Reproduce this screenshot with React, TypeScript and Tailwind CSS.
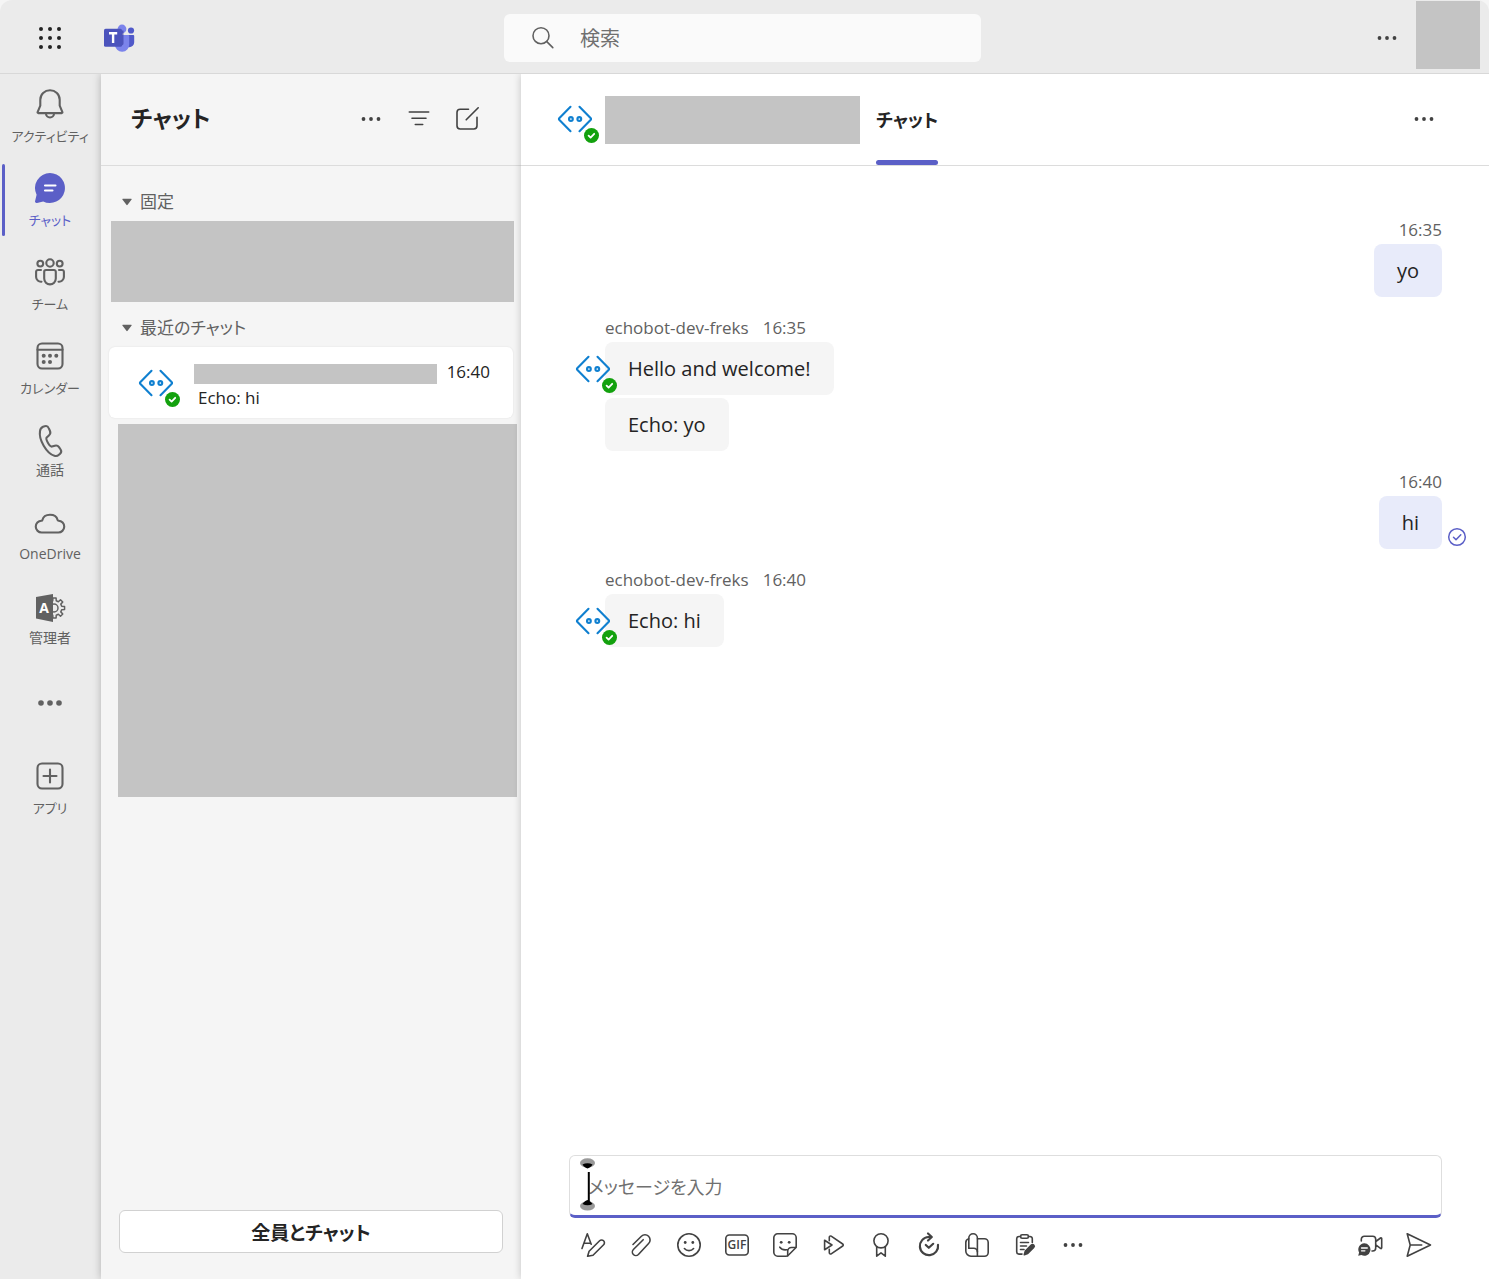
import React from "react";
import type { ReactNode } from "react";

/* ---------- icon helpers ---------- */

function Icon({
  size = 30,
  stroke = 1.6,
  className = "",
  children,
}: {
  size?: number;
  stroke?: number;
  className?: string;
  children: ReactNode;
}) {
  return (
    <svg
      width={size}
      height={size}
      viewBox={`0 0 ${size} ${size}`}
      fill="none"
      stroke="currentColor"
      strokeWidth={stroke}
      strokeLinecap="round"
      strokeLinejoin="round"
      aria-hidden="true"
      className={`shrink-0 ${className}`}
    >
      {children}
    </svg>
  );
}

function RailIcon({ children }: { children: ReactNode }) {
  return (
    <Icon size={36} stroke={2.1}>
      {children}
    </Icon>
  );
}

function Dots({ r = 1.9, gap = 7.5, size = 30 }: { r?: number; gap?: number; size?: number }) {
  const c = size / 2;
  return (
    <Icon size={size}>
      <g fill="currentColor" stroke="none">
        <circle cx={c - gap} cy={c} r={r} />
        <circle cx={c} cy={c} r={r} />
        <circle cx={c + gap} cy={c} r={r} />
      </g>
    </Icon>
  );
}

function gearPath(cx: number, cy: number, outer: number, inner: number, teeth: number) {
  const step = (Math.PI * 2) / teeth;
  const points: string[] = [];
  for (let i = 0; i < teeth; i++) {
    const a = i * step;
    const corners: [number, number][] = [
      [inner, a - step * 0.3],
      [outer, a - step * 0.2],
      [outer, a + step * 0.2],
      [inner, a + step * 0.3],
    ];
    for (const [r, t] of corners) {
      points.push(`${(cx + r * Math.cos(t)).toFixed(2)} ${(cy + r * Math.sin(t)).toFixed(2)}`);
    }
  }
  return `M${points.join("L")}Z`;
}

function TeamsLogo() {
  return (
    <svg width="32" height="30" viewBox="0 0 32 30" aria-label="Teams" role="img" className="shrink-0">
      <circle cx="27" cy="7.5" r="3.1" fill="#5059c9" />
      <path d="M22 12h7.3c.5 0 .9.4.9.9v6.3a5 5 0 0 1-5 5H22z" fill="#5059c9" />
      <circle cx="18" cy="6" r="4.4" fill="#7b83eb" />
      <path d="M10 12h14c.7 0 1.200.5 1.200 1.200v8a7.200 7.200 0 0 1-14.400.6z" fill="#7b83eb" />
      <path d="M11 7.500h8.500v13c0 1-.8 1.800-1.800 1.800H11z" fill="#3b3fa6" opacity=".7" />
      <rect x="0" y="5.800" width="18" height="18" rx="1.600" fill="#4b53bc" />
      <path d="M5 10.300h8.200M9.100 10.300v9.700" stroke="#fff" strokeWidth="2.400" fill="none" />
    </svg>
  );
}

function BotAvatar() {
  return (
    <svg width="44" height="44" viewBox="0 0 44 44" aria-hidden="true" className="shrink-0">
      <g fill="none" stroke="#1080d0" strokeWidth="2.100" strokeLinecap="round" strokeLinejoin="round">
        <path d="M15.500 7.800 4 19.500v1l11.500 11.700M24.500 7.800l11.500 11.700v1L24.500 32.200" />
        <circle cx="15.900" cy="20" r="1.900" />
        <circle cx="24.300" cy="20" r="1.900" />
      </g>
      <circle cx="36.500" cy="36.500" r="7.500" fill="#13a10e" />
      <path
        d="m33.600 36.600 2 2 3.600-3.800"
        fill="none"
        stroke="#fff"
        strokeWidth="1.800"
        strokeLinecap="round"
        strokeLinejoin="round"
      />
    </svg>
  );
}

function Triangle() {
  return (
    <svg width="10" height="8" viewBox="0 0 10 8" aria-hidden="true" className="shrink-0">
      <path d="M.8.800h8.400a.5.5 0 0 1 .4.800L5.600 6.800a.8.8 0 0 1-1.200 0L.4 1.600A.5.5 0 0 1 .8.800z" fill="#616161" />
    </svg>
  );
}

/* ---------- app rail ---------- */

const railItems: { label: string; kana?: boolean; active?: boolean; icon: ReactNode }[] = [
  {
    label: "アクティビティ",
    kana: true,
    icon: (
      <RailIcon>
        <path d="M18 4.200c-5.400 0-9.700 4.200-9.700 9.500v6L5.600 26.100c-.2.500.1 1 .7 1h23.400c.6 0 .9-.5.7-1l-2.700-6.400v-6c0-5.300-4.300-9.500-9.700-9.500z" />
        <path d="M14 27.500a4 4 0 0 0 8 0" />
      </RailIcon>
    ),
  },
  {
    label: "チャット",
    kana: true,
    active: true,
    icon: (
      <RailIcon>
        <path
          d="M18 3a15 15 0 1 1-6.800 28.400L5 32.900a1.500 1.500 0 0 1-1.900-1.900l1.500-6.200A15 15 0 0 1 18 3z"
          fill="currentColor"
          stroke="none"
        />
        <path d="M13 15.500h10.500M13 20.500h7.500" stroke="#fff" />
      </RailIcon>
    ),
  },
  {
    label: "チーム",
    kana: true,
    icon: (
      <RailIcon>
        <circle cx="18" cy="9" r="3.700" />
        <circle cx="8.300" cy="9.600" r="2.900" />
        <circle cx="27.700" cy="9.600" r="2.900" />
        <path d="M14 16h8a1.800 1.800 0 0 1 1.800 1.800v6.800a5.800 5.800 0 0 1-11.600 0v-6.800A1.800 1.800 0 0 1 14 16z" />
        <path d="M9 16H5.900A1.800 1.800 0 0 0 4.100 17.800v5.200a4.800 4.800 0 0 0 5.400 4.700M27 16h3.100a1.800 1.800 0 0 1 1.800 1.800v5.200a4.800 4.800 0 0 1-5.400 4.700" />
      </RailIcon>
    ),
  },
  {
    label: "カレンダー",
    kana: true,
    icon: (
      <RailIcon>
        <rect x="5.500" y="5.500" width="25" height="25" rx="4.500" />
        <path d="M5.500 11.800h25" />
        <g fill="currentColor" stroke="none">
          <circle cx="11.700" cy="17.800" r="2" />
          <circle cx="18" cy="17.800" r="2" />
          <circle cx="24.300" cy="17.800" r="2" />
          <circle cx="11.700" cy="24" r="2" />
          <circle cx="18" cy="24" r="2" />
        </g>
      </RailIcon>
    ),
  },
  {
    label: "通話",
    icon: (
      <RailIcon>
        <path d="m11 4.700 1.700-.5a3.300 3.300 0 0 1 4 1.900l1.200 2.700a4 4 0 0 1-1 4.700l-2.200 2c-.8.900-.3 2.700 1.200 5.300s2.800 4.100 4 3.800l2.900-.9a3.800 3.800 0 0 1 4.200 1.500l1.600 2.300a3.300 3.300 0 0 1-.5 4.200l-1.200 1.100a4.500 4.500 0 0 1-4.500 1c-3.900-1.200-7.500-4.600-10.700-10.100S7.300 13.200 8 9.200a5.200 5.200 0 0 1 3-4.500z" />
      </RailIcon>
    ),
  },
  {
    label: "OneDrive",
    icon: (
      <RailIcon>
        <path d="M9.800 26.500h16.400a5.900 5.900 0 0 0 .3-11.800c-.5 0-.8-.3-.9-.7C24.800 10.700 21.800 8.800 18 8.800s-6.800 1.900-7.600 5.200c-.1.400-.4.700-.9.700a5.900 5.900 0 0 0 .3 11.800z" />
      </RailIcon>
    ),
  },
  {
    label: "管理者",
    icon: (
      <RailIcon>
        <path d={gearPath(22.5, 18, 10.2, 7.4, 8)} strokeWidth="1.500" />
        <circle cx="22" cy="18" r="4" strokeWidth="1.500" />
        <path d="M4 7 21 4v28L4 28.500z" fill="currentColor" stroke="none" />
        <text
          x="12"
          y="22.500"
          textAnchor="middle"
          fill="#fff"
          stroke="none"
          fontSize="14"
          fontWeight="700"
          fontFamily="Open Sans, sans-serif"
        >
          A
        </text>
      </RailIcon>
    ),
  },
  { label: "", icon: <Dots size={36} r={2.8} gap={9} /> },
  {
    label: "アプリ",
    kana: true,
    icon: (
      <RailIcon>
        <rect x="5.500" y="5.500" width="25" height="25" rx="4.500" />
        <path d="M18 11.500v13M11.500 18h13" />
      </RailIcon>
    ),
  },
];

function Rail() {
  return (
    <nav aria-label="アプリ バー" className="flex w-[101px] shrink-0 flex-col bg-[#ebebeb]">
      {railItems.map((item, i) => (
        <button
          key={i}
          type="button"
          aria-label={item.label || "その他"}
          className={`relative flex h-[84px] flex-col items-center pr-px ${
            item.label ? "justify-start pt-3" : "justify-center pb-0.5"
          } ${item.active ? "text-[#5b5fc7]" : "text-[#616161]"}`}
        >
          {item.active && <span className="absolute top-1.5 left-0.5 h-18 w-[3px] rounded-full bg-[#5b5fc7]" />}
          {item.icon}
          {item.label && (
            <span
              className={`leading-5 whitespace-nowrap ${item.kana ? "mt-1 text-[13px]" : "mt-0.5 text-sm"}`}
            >
              {item.label}
            </span>
          )}
        </button>
      ))}
    </nav>
  );
}

/* ---------- chat list ---------- */

function IconButton({ label, children }: { label: string; children: ReactNode }) {
  return (
    <button type="button" aria-label={label} className="flex shrink-0 items-center justify-center text-[#424242]">
      {children}
    </button>
  );
}

function ChatList() {
  return (
    <aside className="z-10 flex w-[420px] shrink-0 flex-col bg-[#f5f5f5] shadow-[0_0_8px_rgba(0,0,0,0.25)]">
      <div className="flex h-[92px] items-center border-b border-[#dcdcdc] pr-[39px] pb-0.5 pl-[30px]">
        <h1 className="flex-1 text-[23px] font-bold text-[#242424]">チャット</h1>
        <div className="flex gap-[18px]">
          <IconButton label="その他のオプション">
            <Dots />
          </IconButton>
          <IconButton label="フィルター">
            <Icon>
              <path d="M5.300 8h19.400M8 14.300h14M11.300 20.500h7.400" />
            </Icon>
          </IconButton>
          <IconButton label="新しいチャット">
            <Icon>
              <path d="M16.500 5.200H8.200a3.200 3.200 0 0 0-3.200 3.200v13.400A3.200 3.200 0 0 0 8.200 25h13.600a3.200 3.200 0 0 0 3.200-3.200v-8.600" />
              <path d="M14.200 15.800 26.200 3.800" />
            </Icon>
          </IconButton>
        </div>
      </div>

      <div className="flex flex-1 flex-col pt-[15px]">
        <button type="button" className="flex h-10 items-center gap-2 pt-0.5 pl-[21px] text-[17px] text-[#616161]">
          <Triangle />
          固定
        </button>
        <div className="mr-[7px] ml-2.5 h-[81px] bg-[#c4c4c4]" />
        <button type="button" className="flex h-[45px] items-center gap-2 pt-1.5 pl-[21px] text-[17px] text-[#616161]">
          <Triangle />
          最近のチャット
        </button>
        <button
          type="button"
          className="mr-2 ml-2 flex h-[71px] items-center rounded-md bg-white pr-[23px] pl-[27px] text-left text-[17px] text-[#242424] shadow-[0_0_2px_rgba(0,0,0,0.1)]"
        >
          <span className="mt-1">
            <BotAvatar />
          </span>
          <span className="ml-3.5 flex flex-1 flex-col pt-1">
            <span className="flex h-[26px] items-center justify-between gap-2.5">
              <span className="mt-1 h-5 flex-1 bg-[#c4c4c4]" />
              <span>16:40</span>
            </span>
            <span className="pl-1 leading-[26px]">Echo: hi</span>
          </span>
        </button>
        <div className="mt-1.5 mr-1 ml-[17px] h-[373px] bg-[#c4c4c4]" />
      </div>

      <div className="px-[18px] pb-[26px]">
        <button
          type="button"
          className="h-[43px] w-full rounded-md border border-[#d1d1d1] bg-white pt-[3px] text-[19px] font-bold text-[#242424]"
        >
          全員とチャット
        </button>
      </div>
    </aside>
  );
}

/* ---------- conversation ---------- */

function Bubble({ mine, children }: { mine?: boolean; children: ReactNode }) {
  return (
    <p
      className={`flex h-[53px] w-fit items-center rounded-lg px-[23px] text-xl text-[#242424] ${
        mine ? "bg-[#e8ebfa]" : "bg-[#f5f5f5]"
      }`}
    >
      {children}
    </p>
  );
}

function Sent({ time, text, receipt }: { time: string; text: string; receipt?: boolean }) {
  return (
    <li className="flex flex-col items-end pr-[47px]">
      <time className="h-[26px] text-[17px] leading-6 text-[#616161]">{time}</time>
      <div className="relative">
        <Bubble mine>{text}</Bubble>
        {receipt && (
          <svg
            width="20"
            height="20"
            viewBox="0 0 20 20"
            fill="none"
            stroke="#5b5fc7"
            strokeWidth="1.500"
            strokeLinecap="round"
            strokeLinejoin="round"
            role="img"
            aria-label="送信済み"
            className="absolute -right-[25px] bottom-0.5"
          >
            <circle cx="10" cy="10" r="8.300" />
            <path d="m6.500 10.300 2.500 2.500 4.800-5" />
          </svg>
        )}
      </div>
    </li>
  );
}

function Received({ time, texts }: { time: string; texts: string[] }) {
  return (
    <li className="flex pl-[52px]">
      <span className="z-10 mt-[33px] h-11 w-8">
        <BotAvatar />
      </span>
      <div>
        <div className="flex h-[26px] gap-3.5 text-[17px] leading-6 text-[#616161]">
          <span>echobot-dev-freks</span>
          <time>{time}</time>
        </div>
        <div className="flex flex-col gap-[3px]">
          {texts.map((t) => (
            <Bubble key={t}>{t}</Bubble>
          ))}
        </div>
      </div>
    </li>
  );
}

const tools: { label: string; icon: ReactNode }[] = [
  {
    label: "書式",
    icon: (
      <Icon>
        <path d="M4 18.500 9.300 3.800l3.900 10.400M6 13.200h6.500" />
        <path d="m9.600 26.300 1.500-5L21.600 10.800a2.700 2.700 0 0 1 4 4L15 25.200z" />
      </Icon>
    ),
  },
  {
    label: "ファイルを添付",
    icon: (
      <Icon>
        <path d="m7 14.500 8.400-8.200a5 5 0 0 1 7.200 7.200L12.400 24.500a3.500 3.500 0 0 1-5-5l9.800-9.800" />
      </Icon>
    ),
  },
  {
    label: "絵文字",
    icon: (
      <Icon>
        <circle cx="15" cy="15" r="11.200" />
        <path d="M10.400 18.500a6 6 0 0 0 9.200 0" />
        <g fill="currentColor" stroke="none">
          <circle cx="11.200" cy="12.500" r="1.400" />
          <circle cx="18.800" cy="12.500" r="1.400" />
        </g>
      </Icon>
    ),
  },
  {
    label: "GIF",
    icon: (
      <Icon>
        <rect x="3.800" y="5" width="22.400" height="20" rx="3.500" />
        <text
          x="15"
          y="19.300"
          textAnchor="middle"
          fill="currentColor"
          stroke="none"
          fontSize="12"
          fontWeight="600"
          fontFamily="Open Sans, sans-serif"
        >
          GIF
        </text>
      </Icon>
    ),
  },
  {
    label: "ステッカー",
    icon: (
      <Icon>
        <path d="M7.700 3.800h14.600A3.900 3.900 0 0 1 26.200 7.700v8.500a3 3 0 0 1-.9 2.100l-7 7a3 3 0 0 1-2.100.9H7.700a3.900 3.900 0 0 1-3.900-3.900V7.700a3.900 3.900 0 0 1 3.900-3.900z" />
        <path d="M26 17.500h-4.500a3.800 3.800 0 0 0-3.800 3.800V26M9.800 17.200c1.700 2.300 4 3 7 2.500" />
        <g fill="currentColor" stroke="none">
          <circle cx="11.200" cy="12.300" r="1.400" />
          <circle cx="19.200" cy="12.300" r="1.400" />
        </g>
      </Icon>
    ),
  },
  {
    label: "ストリーム",
    icon: (
      <Icon>
        <path d="M11.300 10.800V7.200c0-1 1-1.600 1.900-1L24.700 14a1.200 1.200 0 0 1 0 2l-11.500 7.800c-.8.600-1.900 0-1.900-1v-3.600" />
        <path d="M6.600 10.300v9.400L14 15z" />
      </Icon>
    ),
  },
  {
    label: "称賛",
    icon: (
      <Icon>
        <circle cx="15" cy="10.800" r="7.100" />
        <path d="M10.700 17v9.200l4.300-3.400 4.300 3.400V17" />
      </Icon>
    ),
  },
  {
    label: "更新",
    icon: (
      <Icon stroke={2.2}>
        <path d="M24 14.800A9.100 9.100 0 1 1 14.500 7H17" />
        <path d="M14 3.500 17.800 7 14 10.500M11.800 15l3 2.800 4.400-4" />
      </Icon>
    ),
  },
  {
    label: "Viva",
    icon: (
      <Icon>
        <path d="M6.800 18.200V8a4.300 4.300 0 0 1 8.600 0v18.200" />
        <path d="M6.800 8.800A4 4 0 0 0 3.800 12.800v8.200a5.200 5.200 0 0 0 5.200 5.200h13.500a3.700 3.700 0 0 0 3.700-3.700V12.500a3.700 3.700 0 0 0-3.700-3.700h-7M6.800 18.200h5.100a3.500 3.500 0 0 1 3.500 3.500" />
      </Icon>
    ),
  },
  {
    label: "フォーム",
    icon: (
      <Icon>
        <path d="M10.500 6.500H9a2.300 2.300 0 0 0-2.300 2.300v13A2.300 2.300 0 0 0 9 24.100h3M18.500 6.500H20a2.300 2.300 0 0 1 2.300 2.300v3.700" />
        <rect x="10.600" y="4.800" width="7.800" height="3.500" rx="1.500" />
        <path d="M10.500 12.500h8M10.500 16h6M10.500 19.500h3.500" />
        <path d="m14.300 24.700 1-3.600 6-6a1.600 1.600 0 0 1 2.400 2.400l-6 6z" fill="currentColor" />
      </Icon>
    ),
  },
  { label: "その他", icon: <Dots /> },
];

function Composer() {
  return (
    <div className="pr-[47px] pb-[19px] pl-12">
      <div className="relative">
        <input
          type="text"
          aria-label="メッセージを入力"
          placeholder="メッセージを入力"
          className="block h-[63px] w-full rounded-md border border-b-3 border-[#dedede] border-b-[#5b5fc7] bg-white pt-[3px] pl-[18px] text-lg text-[#242424] outline-none placeholder:text-[#707070]"
        />
        <svg
          width="16"
          height="54"
          viewBox="0 0 16 54"
          aria-hidden="true"
          className="pointer-events-none absolute top-0.5 left-2.5"
        >
          <ellipse cx="8.500" cy="6" rx="7.500" ry="4.700" fill="#999" />
          <path d="M3.500 7.500c3-1.700 7-1.700 10 0-1.500 2.500-3.500 3.700-5 4-1.500-.3-3.500-1.500-5-4z" fill="#000" />
          <path d="M9.800 15v29" stroke="#000" strokeWidth="2" />
          <ellipse cx="8.500" cy="49" rx="7.500" ry="4.500" fill="#999" />
          <path d="M3.500 47c3 1.700 7 1.700 10 0-1.500-2.300-3.500-3.500-5-4-1.500.5-3.500 1.700-5 4z" fill="#000" />
        </svg>
      </div>
      <div className="mt-3 flex items-center pr-[9px] pl-[9px]">
        <div className="flex flex-1 gap-[18px]">
          {tools.map((t) => (
            <IconButton key={t.label} label={t.label}>
              {t.icon}
            </IconButton>
          ))}
        </div>
        <div className="flex gap-[18px]">
          <IconButton label="ビデオ クリップ">
            <Icon>
              <path d="M6.300 11V9.300a3 3 0 0 1 3-3h8.400a3 3 0 0 1 3 3v8.700a3 3 0 0 1-3 3h-.7M20.800 11.500l4.700-3.500c.6-.4 1.200-.1 1.200.600v9.200c0 .700-.6 1-1.200.600l-4.700-3.500" />
              <path d="M9.200 13.300a6.200 6.200 0 1 1-2.800 11.700l-3.200.8.900-3.200a6.200 6.200 0 0 1 5.100-9.300z" fill="currentColor" stroke="none" />
              <path d="M6.500 18h5.800M6.500 20.800h3.400" stroke="#fff" strokeWidth="1.300" />
            </Icon>
          </IconButton>
          <IconButton label="送信">
            <Icon>
              <path d="M4.200 3.800 27.500 15 4.200 26.200 7.200 15zM7.200 15h11.500" />
            </Icon>
          </IconButton>
        </div>
      </div>
    </div>
  );
}

function Conversation() {
  return (
    <main className="z-20 flex min-w-0 flex-1 flex-col bg-white shadow-[0_0_8px_rgba(0,0,0,0.2)]">
      <div className="flex h-[92px] shrink-0 items-center border-b border-[#dcdcdc] pr-[50px] pl-[34px]">
        <span className="mt-0.5">
          <BotAvatar />
        </span>
        <div className="ml-1.5 h-12 w-[255px] bg-[#c4c4c4]" />
        <button
          type="button"
          className="relative ml-4 flex h-full items-center text-lg font-bold text-[#242424]"
        >
          チャット
          <span className="absolute inset-x-0 bottom-0 h-[5px] rounded-full bg-[#5b5fc7]" />
        </button>
        <div className="mb-0.5 ml-auto">
          <IconButton label="その他のオプション">
            <Dots />
          </IconButton>
        </div>
      </div>
      <ol className="flex flex-1 flex-col gap-[19px] pt-[52px]">
        <Sent time="16:35" text="yo" />
        <Received time="16:35" texts={["Hello and welcome!", "Echo: yo"]} />
        <Sent time="16:40" text="hi" receipt />
        <Received time="16:40" texts={["Echo: hi"]} />
      </ol>
      <Composer />
    </main>
  );
}

/* ---------- title bar ---------- */

function TitleBar() {
  return (
    <header className="z-30 grid h-[74px] grid-cols-[1fr_477px_1fr] items-center rounded-t-xl border-b border-[#d8d8d8] bg-[#ebebeb] pr-1">
      <div className="flex items-center gap-9 pt-0.5 pl-[35px]">
        <button type="button" aria-label="アプリ起動ツール" className="text-[#242424]">
          <Icon>
            <g fill="currentColor" stroke="none">
              {[6, 15, 24].map((y) => [6, 15, 24].map((x) => <circle key={`${x}-${y}`} cx={x} cy={y} r="2" />))}
            </g>
          </Icon>
        </button>
        <span className="pl-[3px]">
          <TeamsLogo />
        </span>
      </div>
      <label className="mt-0.5 flex h-12 items-center gap-[22px] rounded-md bg-[#fafafa] pl-6 text-[#616161]">
        <Icon>
          <circle cx="13" cy="12.700" r="8" />
          <path d="m18.800 18.600 6 6" />
        </Icon>
        <input
          type="search"
          aria-label="検索"
          placeholder="検索"
          className="min-w-0 flex-1 bg-transparent pt-[3px] text-xl outline-none placeholder:text-[#707070]"
        />
      </label>
      <div className="mr-[5px] flex items-center justify-end gap-3.5 text-[#424242]">
        <span className="pt-0.5">
          <IconButton label="設定など">
            <Dots />
          </IconButton>
        </span>
        <div className="mb-[3px] h-[68px] w-16 bg-[#c4c4c4]" />
      </div>
    </header>
  );
}

export default function App() {
  return (
    <div className="flex min-h-screen flex-col bg-[#f5f5f5] font-['Open_Sans','Noto_Sans_CJK_JP',sans-serif] [font-feature-settings:'palt']">
      <TitleBar />
      <div className="flex flex-1">
        <Rail />
        <ChatList />
        <Conversation />
      </div>
    </div>
  );
}
